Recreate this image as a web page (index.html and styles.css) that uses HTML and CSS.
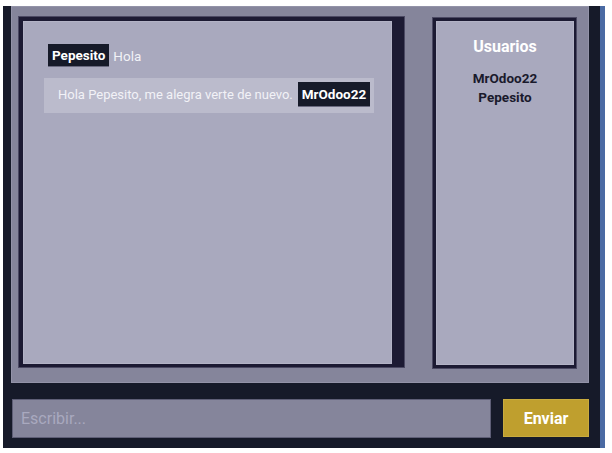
FILE: index.html
```html
<!DOCTYPE html>
<html lang="es">
<head>
<meta charset="utf-8">
<title>Chat</title>
<link rel="stylesheet" href="styles.css">
</head>
<body>
<div class="app">
  <div class="panel">
    <div class="chat">
      <div class="chat-inner">
        <div class="msg msg-in">
          <span class="badge">Pepesito</span>
          <span class="msg-text">Hola</span>
        </div>
        <div class="msg msg-out">
          <span class="msg-text">Hola Pepesito, me alegra verte de nuevo.</span>
          <span class="badge badge-out">MrOdoo22</span>
        </div>
      </div>
    </div>
    <div class="users">
      <div class="users-inner">
        <div class="users-title">Usuarios</div>
        <div class="user">MrOdoo22</div>
        <div class="user">Pepesito</div>
      </div>
    </div>
  </div>
  <div class="composer">
    <input class="composer-input" type="text" placeholder="Escribir...">
    <button class="composer-send" type="button">Enviar</button>
  </div>
</div>
</body>
</html>
```
FILE: styles.css
```css
* { box-sizing: border-box; }
html, body { margin: 0; padding: 0; background: #ffffff; }
body { font-family: Roboto, "Noto Sans", sans-serif; }

.app {
  margin: 6px 7px 5px 3px;
  height: 442px;
  background: #161a29;
  border-right: 5px solid #4a6aa3;
  padding: 0 11px 0 8px;
  display: flex;
  flex-direction: column;
}

.panel {
  height: 377px;
  background: #85859b;
  border: 1px solid #9393a8;
  padding: 9px 11px 0 6px;
  display: flex;
  align-items: flex-start;
}

.chat {
  width: 387px;
  height: 352px;
  background: #1c1a33;
  border: 1px solid #4b4963;
  padding: 4px 12px 3px 4px;
}
.chat-inner {
  height: 100%;
  background: #a9a9be;
  border: 1px solid #b3b3c6;
  padding: 22px 20px;
  display: flex;
  flex-direction: column;
  align-items: flex-start;
  gap: 11px;
}

.msg { display: flex; align-items: center; white-space: nowrap; flex-shrink: 0; }
.msg-in { margin-left: 4px; }
.msg-text { font-size: 13px; color: #f2f2f7; }
.msg-in .msg-text { margin-left: 4px; font-size: 13.5px; }

.badge {
  background: #161a29;
  color: #ffffff;
  font-weight: 700;
  font-size: 13.5px;
  height: 23px;
  line-height: 23px;
  padding: 0 4px;
  border-bottom: 1px solid #6a6a80;
}

.msg-out {
  background: #bbbbcc;
  padding: 4px 4px 6px 14px;
}
.msg-out .msg-text { margin-right: 5px; font-size: 13px; }
.badge-out { height: 25px; line-height: 25px; font-size: 13.5px; }

.users {
  margin-left: 27px;
  margin-top: 1px;
  width: 145px;
  height: 352px;
  background: #1c1a33;
  border: 1px solid #4b4963;
  padding: 3px 2px 3px 3px;
}
.users-inner {
  height: 100%;
  background: #a9a9be;
  border: 1px solid #b3b3c6;
  padding-top: 15px;
  text-align: center;
}
.users-title {
  font-size: 16px;
  font-weight: 700;
  color: #ffffff;
  margin-bottom: 13px;
}
.user {
  font-size: 13.5px;
  font-weight: 700;
  color: #1a1a2c;
  line-height: 19px;
}

.composer {
  margin-top: 16px;
  display: flex;
  gap: 12px;
  padding-left: 1px;
}
.composer-input {
  width: 479px;
  height: 39px;
  background: #85859b;
  border: 1px solid #5e5e76;
  padding: 0 8px;
  font-family: Roboto, "Noto Sans", sans-serif;
  font-size: 16px;
  color: #eeeef4;
  outline: none;
}
.composer-input::placeholder { color: #a9a9bf; }
.composer-send {
  width: 86px;
  height: 38px;
  background: #bf9f2e;
  border: 1px solid #c9ab3e;
  color: #ffffff;
  font-family: Roboto, "Noto Sans", sans-serif;
  font-size: 16px;
  font-weight: 700;
  padding: 0;
}
```
